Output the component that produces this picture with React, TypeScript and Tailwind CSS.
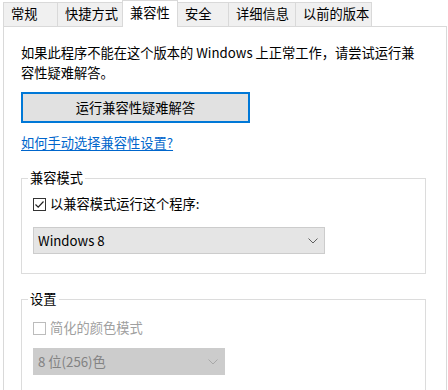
import React from "react";

const font = { fontFamily: '"Noto Sans CJK SC", "Noto Sans", sans-serif' };

function Chevron({ color }: { color: string }) {
  return (
    <svg width="10" height="6" viewBox="0 0 10 6" className="shrink-0">
      <polyline points="0.5,0.5 5,5 9.5,0.5" fill="none" stroke={color} strokeWidth="1" />
    </svg>
  );
}

export default function App() {
  const tabs = [
    { label: "常规", w: 54, cls: "border-l border-t" },
    { label: "快捷方式", w: 65, cls: "border-l border-t" },
    { label: "兼容性", w: 56, active: true },
    { label: "安全", w: 50, cls: "border-t" },
    { label: "详细信息", w: 67, cls: "border-l border-t" },
    { label: "以前的版本", w: 77, cls: "border-x border-t" },
  ];
  return (
    <div className="w-[448px] h-[390px] overflow-hidden bg-white text-[13.25px] text-black" style={font}>
      <div className="flex h-[27px] items-end pl-[3px] relative z-10">
        {tabs.map((t) =>
          t.active ? (
            <div
              key={t.label}
              style={{ width: t.w }}
              className="h-[27px] bg-white border-x border-t border-[#d9d9d9] pl-[7px] pt-[2px] leading-[20px]"
            >
              {t.label}
            </div>
          ) : (
            <div
              key={t.label}
              style={{ width: t.w }}
              className={"h-[24px] mb-[1px] bg-[#f0f0f0] border-[#d9d9d9] pl-[7px] pt-[1px] leading-[20px] " + t.cls}
            >
              {t.label}
            </div>
          )
        )}
      </div>
      <div className="ml-[3px] w-[444px] h-[400px] -mt-[1px] border border-[#d9d9d9] bg-white pl-[17px] pt-[16px]">
        <div className="leading-[20px] whitespace-nowrap">
          如果此程序不能在这个版本的 Windows 上正常工作，请尝试运行兼
          <br />
          容性疑难解答。
        </div>
        <div className="mt-[9px] w-[229px] h-[31px] border-2 border-[#0078d7] bg-[#e1e1e1] flex items-center justify-center">
          运行兼容性疑难解答
        </div>
        <div className="mt-[10px] leading-[20px] text-[#0066cc] underline underline-offset-2">
          如何手动选择兼容性设置?
        </div>
        <fieldset className="mt-[16px] w-[405px] border border-[#dcdcdc] pl-[6px] pb-[19px]">
          <legend className="px-[2px] leading-[18px]">兼容模式</legend>
          <div className="pl-[5px]">
            <div className="mt-[7px] h-[20px] flex items-center">
              <div className="w-[13px] h-[13px] border border-[#333333] bg-white flex items-center justify-center">
                <svg width="11" height="11" viewBox="0 0 11 11">
                  <polyline points="1.5,5.5 4.2,8.2 9.5,2.5" fill="none" stroke="#222" strokeWidth="1.2" />
                </svg>
              </div>
              <span className="ml-[4px]">以兼容模式运行这个程序:</span>
            </div>
            <div className="mt-[13px] w-[292px] h-[27px] bg-[#e5e5e5] border border-[#cccccc] flex items-center justify-between pl-[4px] pr-[6px]">
              <span>Windows 8</span>
              <Chevron color="#606060" />
            </div>
          </div>
        </fieldset>
        <fieldset className="mt-[16px] w-[405px] border border-[#dcdcdc] pl-[6px] pb-[19px]">
          <legend className="px-[2px] leading-[18px]">设置</legend>
          <div className="pl-[5px]">
            <div className="mt-[10px] h-[20px] flex items-center">
              <div className="w-[13px] h-[13px] border border-[#bcbcbc] bg-white" />
              <span className="ml-[4px] text-[#a0a0a0]">简化的颜色模式</span>
            </div>
            <div className="mt-[10px] w-[192px] h-[27px] bg-[#cccccc] border border-[#cccccc] flex items-center justify-between pl-[4px] pr-[6px] text-[#838383]">
              <span>8 位(256)色</span>
              <Chevron color="#a8a8a8" />
            </div>
          </div>
        </fieldset>
      </div>
    </div>
  );
}
